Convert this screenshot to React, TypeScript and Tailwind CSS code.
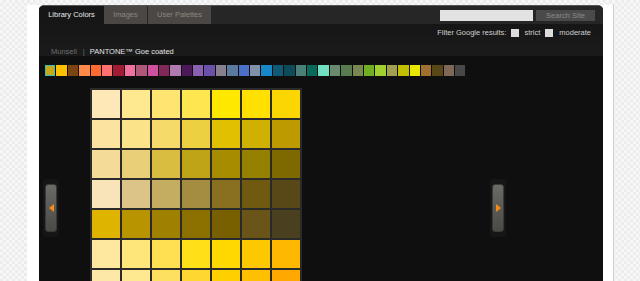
import React from 'react';

const strip = [
  '#c8a81c', '#ffc000', '#7a4510', '#ff8a4a', '#ff6a30', '#ff7070', '#a01c34', '#f070a0',
  '#b0587a', '#d050a0', '#802858', '#b07ab0', '#4a1a58', '#8a60b0', '#6a50a8', '#888090',
  '#5a7aa0', '#4a70c8', '#8090a8', '#1888c8', '#105a78', '#0e4a58', '#4a8078', '#0a6a5a',
  '#70e0c0', '#6a8a70', '#5a7a50', '#788850', '#70b020', '#a0d030', '#a0a050', '#c0c000',
  '#e8e800', '#a07030', '#584818', '#806858', '#484848',
];

const grid = [
  ['#fee8b8', '#fee890', '#fee470', '#fee650', '#ffe800', '#ffe000', '#fcd600'],
  ['#fce3a0', '#fbe38a', '#f5da6a', '#ecd040', '#e0c000', '#d0b000', '#bc9a00'],
  ['#f4dc98', '#e8cf78', '#d8bd40', '#c0a418', '#a88c00', '#968000', '#7e6800'],
  ['#f8e4b8', '#dcc488', '#c4ac60', '#a48c40', '#887020', '#705a10', '#584818'],
  ['#deb400', '#b89400', '#a08000', '#8c7000', '#786000', '#6a5418', '#4a4020'],
  ['#fee8a0', '#fee67a', '#fee050', '#fee018', '#fed800', '#fec800', '#feb800'],
  ['#fee8a8', '#fee890', '#fee060', '#fed830', '#fed000', '#fec000', '#fea800'],
];

const Arrow = ({ dir }: { dir: 'left' | 'right' }) => (
  <div className="w-[16px] h-[58px] bg-[#161616] rounded-[3px] flex items-center justify-center">
    <div className="w-[12px] h-[48px] rounded-[3px] border border-[#3a3a38] bg-gradient-to-b from-[#6c6a66] to-[#4c4a46] flex items-center justify-center">
      {dir === 'left' ? (
        <div className="w-0 h-0 border-y-[4px] border-y-transparent border-r-[5px] border-r-[#f28c12]" />
      ) : (
        <div className="w-0 h-0 border-y-[4px] border-y-transparent border-l-[5px] border-l-[#f28c12]" />
      )}
    </div>
  </div>
);

export default function App() {
  return (
    <div className="min-h-[281px] h-[281px] overflow-hidden bg-[repeating-conic-gradient(#ececec_0%_25%,#f7f7f7_0%_50%)] bg-[length:6px_6px] pl-[27px] font-['Liberation_Sans',Arial,sans-serif]">
      <div className="w-[587px] h-full bg-white pl-[12px] pr-[10px] border-r border-[#d0d0d0]">
        <div className="mt-[5px] w-[564px] h-[300px] rounded-t-[5px] overflow-hidden bg-[#0f0f0f] border-t border-[#555]">
          {/* tab bar */}
          <div className="h-[18px] bg-[#262626] flex items-stretch text-[7.5px]">
            <div className="w-[65px] bg-[#161616] text-[#e8e8e8] flex items-center justify-center">Library Colors</div>
            <div className="w-[43px] bg-[#4a4744] text-[#8b8781] flex items-center justify-center">Images</div>
            <div className="w-[63px] ml-[1px] bg-[#4a4744] text-[#8b8781] flex items-center justify-center">User Palettes</div>
            <div className="flex-1" />
            <div className="flex items-start pt-[4px] pr-[8px] gap-[3px]">
              <div className="w-[93px] h-[11px] bg-[#e2e2e2]" />
              <div className="w-[59px] h-[11px] bg-[#4a4a4a] text-[#8a8a8a] flex items-center justify-center">Search Site</div>
            </div>
          </div>

          {/* header */}
          <div className="h-[32px] bg-gradient-to-b from-[#161616] to-[#1b1b1b] relative text-[7.5px]">
            <div className="flex justify-end items-center pt-[3px] pr-[12px] text-[#d0d0d0]">
              <span>Filter Google results:</span>
              <span className="w-[8px] h-[8px] bg-[#dcdcdc] ml-[5px]" />
              <span className="ml-[5px]">strict</span>
              <span className="w-[8px] h-[8px] bg-[#dcdcdc] ml-[5px]" />
              <span className="ml-[6px]">moderate</span>
            </div>
            <div className="flex items-center pl-[12px] mt-[8px]">
              <span className="text-[#6e6e6e]">Munsell</span>
              <span className="text-[#6e6e6e] ml-[6px]">|</span>
              <span className="text-[#e4e4e4] ml-[5px]">PANTONE™ Goe coated</span>
            </div>
          </div>

          {/* content */}
          <div className="relative pl-[6px] pt-[9px]">
            <div className="flex gap-[1px]">
              {strip.map((c, i) => (
                <div
                  key={i}
                  className={`w-[10.4px] h-[11px] ${i === 0 ? 'border border-[#3cc0b0]' : ''}`}
                  style={{ backgroundColor: c }}
                />
              ))}
            </div>
            <div className="ml-[45px] mt-[12px] w-[212px] p-[2px] bg-[#2a2a2a] grid grid-cols-7 gap-[2px]">
              {grid.flat().map((c, i) => (
                <div key={i} className="h-[28px]" style={{ backgroundColor: c }} />
              ))}
            </div>
            <div className="absolute left-[4px] top-[123px]">
              <Arrow dir="left" />
            </div>
            <div className="absolute left-[451px] top-[123px]">
              <Arrow dir="right" />
            </div>
          </div>
        </div>
      </div>
    </div>
  );
}
